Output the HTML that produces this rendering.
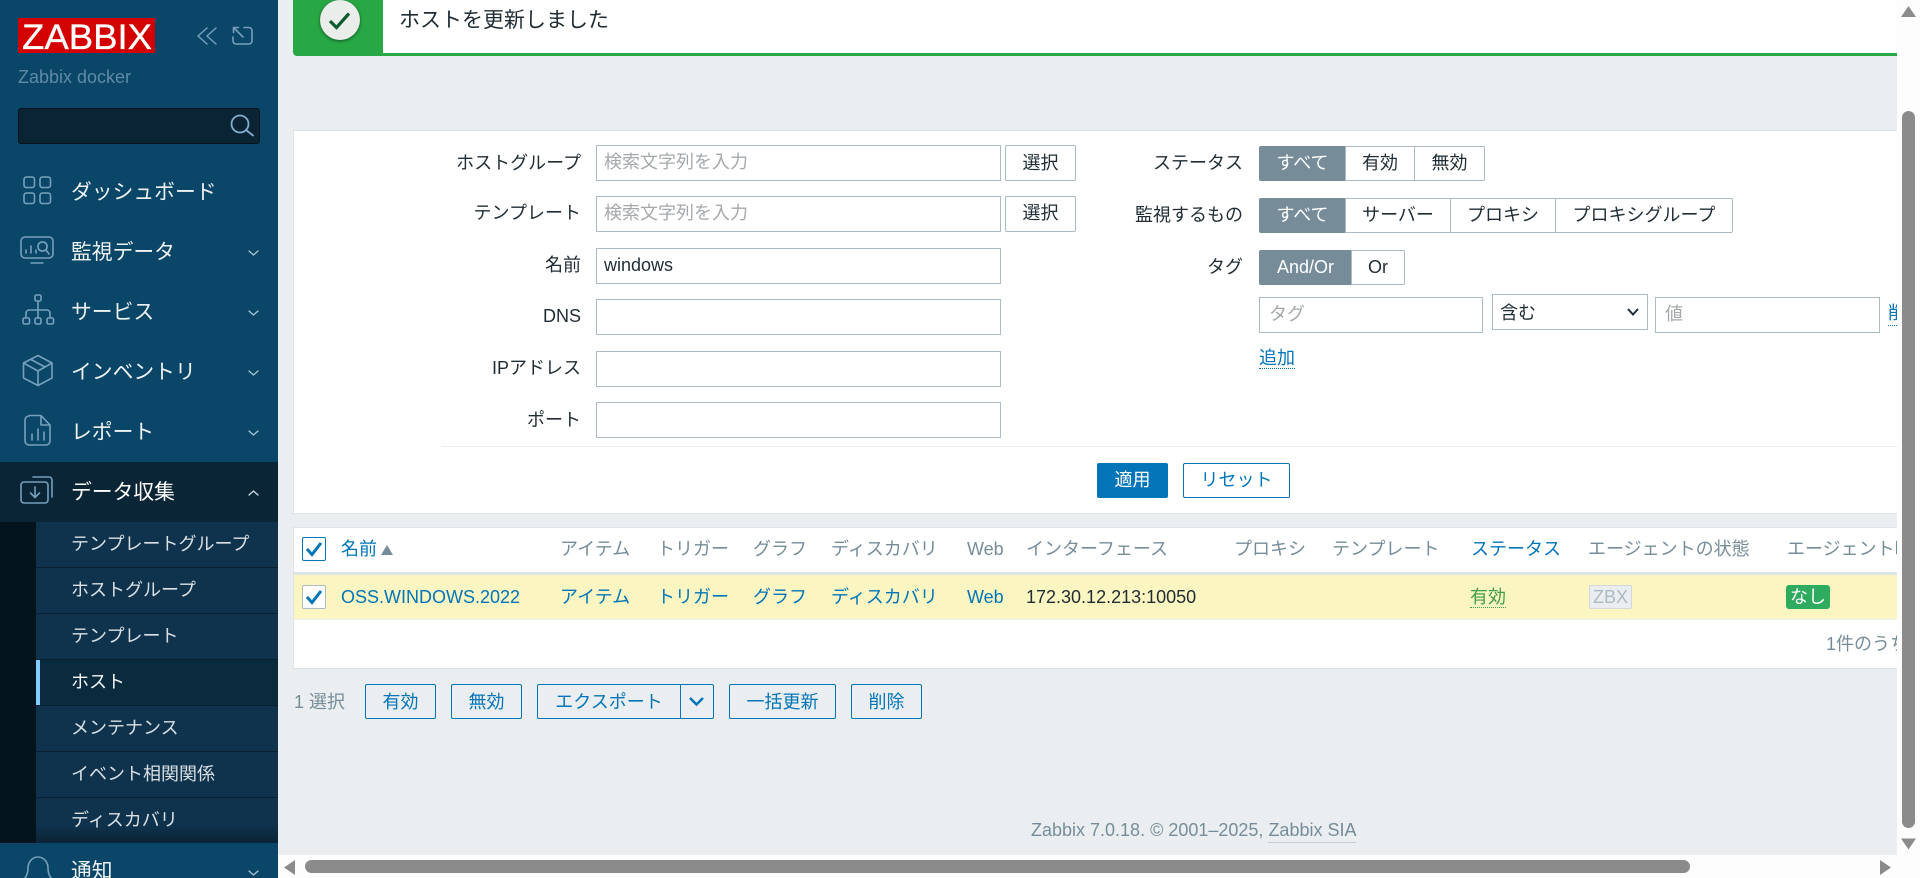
<!DOCTYPE html>
<html lang="ja"><head><meta charset="utf-8"><title>Zabbix</title>
<style>
html,body{margin:0;padding:0;width:1920px;height:878px;overflow:hidden;background:#ebeef0}
body{position:relative;font-family:"Liberation Sans","Noto Sans CJK JP",sans-serif;font-size:18px;color:#1f2c33}
div,span{box-sizing:border-box}
.a{position:absolute}
.t{position:absolute;white-space:nowrap;height:30px;line-height:30px}
.l{position:absolute;white-space:nowrap;height:30px;line-height:30px;right:1339px}
.r{position:absolute;white-space:nowrap;height:30px;line-height:30px;right:677px}
.i{position:absolute;background:#fff;border:1px solid #acbbc2;padding-left:7px;line-height:33px;white-space:nowrap}
.ph{color:#a5a9ab}
.b{position:absolute;background:#fff;border:1px solid #acbbc2;text-align:center;white-space:nowrap;line-height:33px;border-right-width:1px}
.s{background:#768d99;color:#fff;border-color:#768d99}
.m{position:absolute;left:71px;height:30px;line-height:30px;font-size:20.8px;color:#eef2f4;white-space:nowrap}
.u{position:absolute;left:71px;height:30px;line-height:30px;font-size:18px;color:#d9e0e4;white-space:nowrap}
.h{position:absolute;top:534px;height:30px;line-height:30px;color:#768d99;white-space:nowrap}
.c{position:absolute;top:582px;height:30px;line-height:30px;color:#0275b8;white-space:nowrap}
.f{position:absolute;top:684px;height:35px;border:1px solid #0275b8;border-radius:2px;color:#0275b8;text-align:center;line-height:35px;white-space:nowrap;background:#ebeef0}
.sep{position:absolute;left:36px;width:242px;height:1px;background:#08202f}
svg{position:absolute;left:0;top:0;overflow:visible}
</style></head><body>

<!-- sidebar -->
<div class="a" style="left:0;top:0;width:278px;height:878px;background:#0a4668"></div>
<div class="a" style="left:0;top:462px;width:278px;height:60px;background:#0a2536"></div>
<div class="a" style="left:0;top:522px;width:36px;height:321px;background:#04141c"></div>
<div class="a" style="left:36px;top:522px;width:242px;height:321px;background:#0f334d"></div>
<div class="a" style="left:36px;top:659px;width:242px;height:46px;background:#0a2a3e"></div>
<div class="a" style="left:36px;top:660px;width:4px;height:45px;background:#7fccff"></div>
<div class="a" style="left:36px;top:825px;width:242px;height:18px;background:linear-gradient(rgba(8,30,44,0),rgba(8,30,44,.75))"></div>
<div class="sep" style="top:567px"></div><div class="sep" style="top:613px"></div><div class="sep" style="top:659px"></div><div class="sep" style="top:705px"></div><div class="sep" style="top:751px"></div><div class="sep" style="top:797px"></div>

<div class="a" style="left:18px;top:18px;width:137px;height:35px;background:#d40000"></div>
<svg width="1920" height="878"><text x="22" y="49" font-family="Liberation Sans" font-size="35" fill="#fff" stroke="#fff" stroke-width=".3" textLength="130" lengthAdjust="spacingAndGlyphs">ZABBIX</text></svg>
<div class="t" style="left:18px;top:62px;font-size:18px;color:#5f8aa6">Zabbix docker</div>
<div class="a" style="left:18px;top:108px;width:242px;height:36px;background:#0a2434;border:1px solid #05141d;border-radius:3px"></div>

<svg width="1920" height="878" fill="none" stroke="#76a0bc" stroke-width="1.600" stroke-linecap="round" stroke-linejoin="round">
<path d="M207 28L198 36L207 44M216 28L207 36L216 44" stroke-width="1.500"/>
<path d="M244 27.500H249a3 3 0 0 1 3 3V41a3 3 0 0 1-3 3H236a3 3 0 0 1-3-3V37M233.500 27.500L243 37M233.500 27.500h5M233.500 27.500v5"/>
<circle cx="240" cy="124" r="8.500" stroke="#7fb0d0" stroke-width="1.800"/><path d="M246 130L253 135.500" stroke="#7fb0d0" stroke-width="1.800"/>
<!-- dashboard -->
<rect x="24" y="177" width="10.500" height="10.500" rx="2.500"/><rect x="40" y="177" width="10.500" height="10.500" rx="2.500"/><rect x="24" y="193" width="10.500" height="10.500" rx="2.500"/><rect x="40" y="193" width="10.500" height="10.500" rx="2.500"/>
<!-- monitoring -->
<rect x="21" y="237" width="32" height="21" rx="4"/><path d="M31 263H43M26 253V250M31 253V246M36 253V250"/><circle cx="42.500" cy="246.500" r="4.600"/><path d="M46 250L49 254"/>
<!-- services -->
<rect x="35" y="295" width="6" height="6" rx="1.500"/><path d="M38 301V318M26 317V313a3 3 0 0 1 3-3H47a3 3 0 0 1 3 3V317"/><rect x="23" y="318" width="6.500" height="6" rx="1.500"/><rect x="35" y="318" width="6" height="6" rx="1.500"/><rect x="47" y="318" width="6.500" height="6" rx="1.500"/>
<!-- inventory -->
<path d="M38 355.500L52 363V378L38 385.500L23.500 378V363ZM23.500 363L38 371L52 363M38 371V385.500M31 359.500L45 367"/>
<!-- reports -->
<path d="M29 415.500H41L50 425V441a4 4 0 0 1-4 4H29a4 4 0 0 1-4-4V420a4 4 0 0 1 4-4ZM41 416V425H50M32 440V434M38 440V429M44 440V432"/>
<!-- data collection -->
<rect x="21" y="482" width="27" height="21" rx="3"/><path d="M33 477H49a3 3 0 0 1 3 3V497M35 487V497M30.500 493L35 497.500L39.500 493"/>
<!-- bell -->
<path d="M23 880Q28 876 28 868a10 11 0 0 1 20 0Q48 876 53 880"/>
<!-- chevrons -->
<g stroke="#a9c4d6" stroke-width="1.300"><path d="M249 251L253.500 255L258 251M249 311L253.500 315L258 311M249 371L253.500 375L258 371M249 431L253.500 435L258 431M249 871L253.500 875L258 871"/><path d="M249 495L253.500 491L258 495" stroke="#cfdde6"/></g>
</svg>

<div class="m" style="top:178px">ダッシュボード</div>
<div class="m" style="top:238px">監視データ</div>
<div class="m" style="top:298px">サービス</div>
<div class="m" style="top:358px">インベントリ</div>
<div class="m" style="top:418px">レポート</div>
<div class="m" style="top:478px;color:#fff">データ収集</div>
<div class="m" style="top:857px">通知</div>
<div class="u" style="top:529px">テンプレートグループ</div>
<div class="u" style="top:575px">ホストグループ</div>
<div class="u" style="top:621px">テンプレート</div>
<div class="u" style="top:667px;color:#f4f6f8">ホスト</div>
<div class="u" style="top:713px">メンテナンス</div>
<div class="u" style="top:759px">イベント相関関係</div>
<div class="u" style="top:805px">ディスカバリ</div>

<!-- message -->
<div class="a" style="left:293px;top:0;width:1604px;height:56px;background:#28a745;border-bottom-left-radius:4px"></div>
<div class="a" style="left:383px;top:0;width:1514px;height:53px;background:#fff"></div>
<div class="a" style="left:320px;top:0;width:40px;height:40px;border-radius:50%;background:#e9eeea;box-shadow:0 1px 3px rgba(0,50,20,.7)"></div>
<svg width="1920" height="878" fill="none"><path d="M330 21L336.500 27.500L349 13.500" stroke="#0f5c2e" stroke-width="3.200"/></svg>
<div class="t" style="left:399px;top:6px;font-size:21px">ホストを更新しました</div>

<!-- filter panel -->
<div class="a" style="left:293px;top:130px;width:1604px;height:384px;background:#fff;border:1px solid #dfe4e7;border-right:0"></div>
<div class="l" style="top:148px">ホストグループ</div>
<div class="i ph" style="left:596px;top:145px;width:405px;height:36px">検索文字列を入力</div>
<div class="b" style="left:1005px;top:145px;width:71px;height:36px;border-radius:2px;line-height:35px">選択</div>
<div class="l" style="top:198px">テンプレート</div>
<div class="i ph" style="left:596px;top:196px;width:405px;height:36px">検索文字列を入力</div>
<div class="b" style="left:1005px;top:196px;width:71px;height:36px;border-radius:2px">選択</div>
<div class="l" style="top:250px">名前</div>
<div class="i" style="left:596px;top:248px;width:405px;height:36px">windows</div>
<div class="l" style="top:301px">DNS</div>
<div class="i" style="left:596px;top:299px;width:405px;height:36px"></div>
<div class="l" style="top:353px">IPアドレス</div>
<div class="i" style="left:596px;top:351px;width:405px;height:36px"></div>
<div class="l" style="top:405px">ポート</div>
<div class="i" style="left:596px;top:402px;width:405px;height:36px"></div>

<div class="r" style="top:148px">ステータス</div>
<div class="b s" style="left:1259px;top:146px;width:87px;height:35px;border-radius:2px 0 0 2px">すべて</div>
<div class="b" style="left:1345px;top:146px;width:70px;height:35px">有効</div>
<div class="b" style="left:1414px;top:146px;width:71px;height:35px;border-radius:0 2px 2px 0">無効</div>
<div class="r" style="top:200px">監視するもの</div>
<div class="b s" style="left:1259px;top:198px;width:87px;height:35px;border-radius:2px 0 0 2px">すべて</div>
<div class="b" style="left:1345px;top:198px;width:106px;height:35px">サーバー</div>
<div class="b" style="left:1450px;top:198px;width:106px;height:35px">プロキシ</div>
<div class="b" style="left:1555px;top:198px;width:178px;height:35px;border-radius:0 2px 2px 0">プロキシグループ</div>
<div class="r" style="top:252px">タグ</div>
<div class="b s" style="left:1259px;top:250px;width:93px;height:35px;border-radius:2px 0 0 2px">And/Or</div>
<div class="b" style="left:1351px;top:250px;width:54px;height:35px;border-radius:0 2px 2px 0">Or</div>
<div class="i ph" style="left:1259px;top:297px;width:224px;height:36px;padding-left:9px">タグ</div>
<div class="i" style="left:1492px;top:294px;width:156px;height:36px;line-height:37px">含む</div>
<svg width="1920" height="878" fill="none"><path d="M1628 309L1633 314.500L1638 309" stroke="#1f2c33" stroke-width="2"/></svg>
<div class="i ph" style="left:1655px;top:297px;width:225px;height:36px;padding-left:9px">値</div>
<div class="a" style="left:1888px;top:297px;width:9px;height:36px;overflow:hidden"><div class="t" style="left:0;top:1px;color:#0275b8">削除</div></div>
<div class="a" style="left:1888px;top:325px;width:9px;border-bottom:1px dotted #0275b8"></div>
<div class="t" style="left:1259px;top:343px;color:#0275b8">追加</div>
<div class="a" style="left:1259px;top:368px;width:36px;border-bottom:1px dotted #0275b8"></div>

<div class="a" style="left:441px;top:446px;width:1456px;height:1px;background:#ebeef0"></div>
<div class="a" style="left:1097px;top:463px;width:71px;height:35px;background:#0275b8;color:#fff;border-radius:2px;text-align:center;line-height:35px">適用</div>
<div class="a" style="left:1183px;top:463px;width:107px;height:35px;background:#fff;color:#0275b8;border:1px solid #0275b8;border-radius:2px;text-align:center;line-height:33px">リセット</div>

<!-- table -->
<div class="a" style="left:293px;top:527px;width:1604px;height:142px;background:#fff;border:1px solid #dfe4e7;border-right:0"></div>
<div class="a" style="left:294px;top:572px;width:1603px;height:3px;background:#dfe4e7"></div>
<div class="a" style="left:294px;top:575px;width:1603px;height:44px;background:#fbf5c2"></div>
<div class="a" style="left:294px;top:619px;width:1603px;height:1px;background:#ebeef0"></div>
<div class="a" style="left:302px;top:537px;width:24px;height:24px;border:1px solid #0275b8;border-radius:2px;background:#fff"></div>
<div class="a" style="left:302px;top:585px;width:24px;height:24px;border:1px solid #acbbc2;border-radius:2px;background:#fff"></div>
<svg width="1920" height="878" fill="none" stroke="#0275b8" stroke-width="3"><path d="M307 549L312 554.500L321 543M307 597L312 602.500L321 591"/></svg>
<div class="h" style="left:341px;color:#0275b8">名前</div>
<div class="a" style="left:381px;top:545px;width:0;height:0;border-left:6px solid transparent;border-right:6px solid transparent;border-bottom:10px solid #768d99"></div>
<div class="h" style="left:560px">アイテム</div>
<div class="h" style="left:657px">トリガー</div>
<div class="h" style="left:753px">グラフ</div>
<div class="h" style="left:831px">ディスカバリ</div>
<div class="h" style="left:967px">Web</div>
<div class="h" style="left:1026px">インターフェース</div>
<div class="h" style="left:1234px">プロキシ</div>
<div class="h" style="left:1332px">テンプレート</div>
<div class="h" style="left:1471px;color:#0275b8">ステータス</div>
<div class="h" style="left:1588px">エージェントの状態</div>
<div class="a" style="left:1787px;top:534px;width:110px;height:30px;overflow:hidden"><div class="h" style="left:0;top:0">エージェント暗号化</div></div>

<div class="c" style="left:341px">OSS.WINDOWS.2022</div>
<div class="c" style="left:560px">アイテム</div>
<div class="c" style="left:657px">トリガー</div>
<div class="c" style="left:753px">グラフ</div>
<div class="c" style="left:831px">ディスカバリ</div>
<div class="c" style="left:967px">Web</div>
<div class="c" style="left:1026px;color:#1f2c33">172.30.12.213:10050</div>
<div class="c" style="left:1470px;color:#3f9e48">有効</div>
<div class="a" style="left:1470px;top:607px;width:36px;border-bottom:1px dotted #3f9e48"></div>
<div class="a" style="left:1589px;top:585px;width:43px;height:24px;background:#ebeef0;border:1px solid #d1d8dc;border-radius:2px;color:#acbbc2;text-align:center;line-height:22px;font-size:18px">ZBX</div>
<div class="a" style="left:1786px;top:585px;width:44px;height:24px;background:#2fab60;border-radius:3px;color:#fff;text-align:center;line-height:24px;font-size:18px">なし</div>
<div class="a" style="left:1826px;top:629px;width:71px;height:30px;overflow:hidden"><div class="t" style="left:0;top:0;color:#768d99">1件のうち1件を表示</div></div>

<!-- bottom buttons -->
<div class="t" style="left:294px;top:687px;color:#768d99">1 選択</div>
<div class="f" style="left:365px;width:71px">有効</div>
<div class="f" style="left:451px;width:71px">無効</div>
<div class="f" style="left:537px;width:144px;border-radius:2px 0 0 2px">エクスポート</div>
<div class="f" style="left:680px;width:34px;border-radius:0 2px 2px 0"></div>
<svg width="1920" height="878" fill="none"><path d="M690 698L696.500 704.500L703 698" stroke="#0275b8" stroke-width="2.500"/></svg>
<div class="f" style="left:729px;width:107px">一括更新</div>
<div class="f" style="left:851px;width:71px">削除</div>

<!-- footer -->
<div class="t" style="left:1031px;top:815px;font-size:18px;color:#768d99">Zabbix 7.0.18. © 2001–2025, <span style="border-bottom:1px solid #c4cfd5;padding-bottom:2px">Zabbix SIA</span></div>

<!-- scrollbars -->
<div class="a" style="left:1897px;top:0;width:23px;height:878px;background:#fdfdfd"></div>
<div class="a" style="left:278px;top:855px;width:1642px;height:23px;background:#fdfdfd"></div>
<div class="a" style="left:1902px;top:111px;width:13px;height:717px;background:#8b8b8b;border-radius:6.500px"></div>
<div class="a" style="left:305px;top:860px;width:1385px;height:13px;background:#8b8b8b;border-radius:6.500px"></div>
<svg width="1920" height="878" fill="#8b8b8b"><path d="M1908.500 6L1916 17H1901ZM1901 838.500H1916L1908.500 849.500ZM1880 860L1891 867.500L1880 875ZM295 860L284 867.500L295 875Z"/></svg>

</body></html>
